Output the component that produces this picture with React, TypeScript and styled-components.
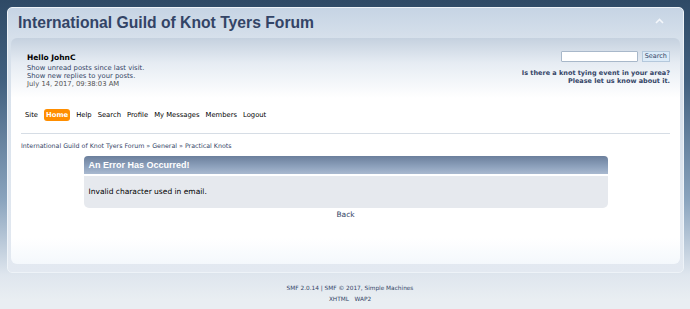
import React from "react";
import styled, { createGlobalStyle } from "styled-components";

const GlobalStyle = createGlobalStyle`
  html, body {
    margin: 0;
    padding: 0;
  }
  body {
    background: linear-gradient(180deg, #2f4a66 0px, #41607f 80px, #8aa4be 200px, #dfe6ee 275px, #e9eef2 300px);
    background-color: #e9eef2;
    font-family: "DejaVu Sans", Verdana, sans-serif;
    min-height: 309px;
  }
`;

const Wrapper = styled.div`
  margin: 7px 6px 0 7px;
  border: 1px solid #eef3f8;
  border-radius: 5px;
  background: linear-gradient(180deg, #c6d4e4 0px, #d6e0eb 30px, #e3e9f1 100%);
  padding: 0 3px 8px 3px;
`;

const Header = styled.div`
  height: 30px;
  display: flex;
  align-items: center;
  justify-content: space-between;
  padding: 0 16px 0 7px;
`;

const ForumTitle = styled.h1`
  margin: 0;
  font-family: "Liberation Sans", Arial, sans-serif;
  font-size: 15.7px;
  font-weight: bold;
  color: #334466;
`;

const Collapse = styled.svg`
  width: 9px;
  height: 6px;
  margin-top: -4px;
`;

const Panel = styled.div`
  border-radius: 6px;
  background: linear-gradient(180deg, #c5d1df 0px, #e6ecf3 25px, #ffffff 60px, #ffffff 200px, #f4f8fc 100%);
  padding: 0 10px 0 10px;
  height: 226px;
`;

const UpperSection = styled.div`
  display: flex;
  justify-content: space-between;
  padding: 13px 0 0 6px;
  height: 47px;
`;

const UserInfo = styled.div`
  margin-top: 3px;
  font-size: 6.8px;
  line-height: 8px;
  color: #334466;
`;

const Greeting = styled.div`
  font-weight: bold;
  font-size: 7.5px;
  color: #000;
  margin-bottom: 2px;
`;

const Muted = styled.div`
  color: #555;
`;

const SearchArea = styled.div`
  display: flex;
  flex-direction: column;
  align-items: flex-end;
`;

const SearchRow = styled.div`
  display: flex;
  gap: 4px;
  margin-bottom: 7px;
`;

const SearchInput = styled.div`
  width: 75px;
  height: 9px;
  border: 1px solid #a8b8ca;
  background: #fff;
  border-radius: 1px;
`;

const SearchButton = styled.div`
  height: 9px;
  padding: 0 2px;
  border: 1px solid #b4c8dc;
  background: #dcebf8;
  font-size: 6.5px;
  line-height: 9px;
  color: #334466;
`;

const Notice = styled.div`
  font-size: 6.5px;
  line-height: 8px;
  font-weight: bold;
  text-align: right;
  color: #334466;
`;

const Menu = styled.div`
  display: flex;
  align-items: center;
  gap: 6px;
  padding: 9px 0 0 4px;
  height: 16px;
`;

const MenuItem = styled.span<{ $active?: boolean }>`
  font-size: 6.8px;
  line-height: 12px;
  padding: 0 ${(p) => (p.$active ? "2px" : "0")};
  border-radius: 3px;
  color: ${(p) => (p.$active ? "#fff" : "#000")};
  font-weight: ${(p) => (p.$active ? "bold" : "normal")};
  background: ${(p) => (p.$active ? "#ff8e00" : "transparent")};
`;

const Divider = styled.div`
  margin: 10px 0 0 0;
  border-top: 1px solid #d6dde5;
`;

const Breadcrumb = styled.div`
  font-size: 6.3px;
  color: #334466;
  padding: 8px 0 0 0;
  height: 10px;
`;

const ErrorBox = styled.div`
  width: 524px;
  margin: 4px auto 0 auto;
`;

const ErrorHeader = styled.div`
  height: 18px;
  border-radius: 4px 4px 0 0;
  background: linear-gradient(180deg, #6b7f9c 0%, #8ea2bd 60%, #a9b9cf 100%);
  color: #fff;
  font-family: "Liberation Sans", Arial, sans-serif;
  font-weight: bold;
  font-size: 9px;
  line-height: 18px;
  padding-left: 5px;
`;

const ErrorBody = styled.div`
  margin-top: 2px;
  height: 32px;
  border-radius: 0 0 5px 5px;
  background: #e6e9ee;
  font-size: 7.5px;
  line-height: 32px;
  padding-left: 5px;
  color: #000;
`;

const Back = styled.div`
  text-align: center;
  font-size: 7.5px;
  color: #334466;
  margin-top: 2px;
`;

const Footer = styled.div`
  text-align: center;
  font-size: 5.8px;
  line-height: 11px;
  color: #334466;
  padding: 10px 0 0 10px;
`;

const App: React.FC = () => {
  const menu = ["Site", "Home", "Help", "Search", "Profile", "My Messages", "Members", "Logout"];
  return (
    <>
      <GlobalStyle />
      <Wrapper>
        <Header>
          <ForumTitle>International Guild of Knot Tyers Forum</ForumTitle>
          <Collapse viewBox="0 0 9 6">
            <path d="M1 5 L4.5 1.5 L8 5" fill="none" stroke="#f4f7fb" strokeWidth="1.6" />
          </Collapse>
        </Header>
        <Panel>
          <UpperSection>
            <UserInfo>
              <Greeting>Hello JohnC</Greeting>
              <div>Show unread posts since last visit.</div>
              <div>Show new replies to your posts.</div>
              <Muted>July 14, 2017, 09:38:03 AM</Muted>
            </UserInfo>
            <SearchArea>
              <SearchRow>
                <SearchInput />
                <SearchButton>Search</SearchButton>
              </SearchRow>
              <Notice>
                Is there a knot tying event in your area?
                <br />
                Please let us know about it.
              </Notice>
            </SearchArea>
          </UpperSection>
          <Menu>
            {menu.map((m) => (
              <MenuItem key={m} $active={m === "Home"}>
                {m}
              </MenuItem>
            ))}
          </Menu>
          <Divider />
          <Breadcrumb>International Guild of Knot Tyers Forum » General » Practical Knots</Breadcrumb>
          <ErrorBox>
            <ErrorHeader>An Error Has Occurred!</ErrorHeader>
            <ErrorBody>Invalid character used in email.</ErrorBody>
          </ErrorBox>
          <Back>Back</Back>
        </Panel>
      </Wrapper>
      <Footer>
        <div>SMF 2.0.14 | SMF © 2017, Simple Machines</div>
        <div>XHTML&nbsp;&nbsp;&nbsp;WAP2</div>
      </Footer>
    </>
  );
};

export default App;
